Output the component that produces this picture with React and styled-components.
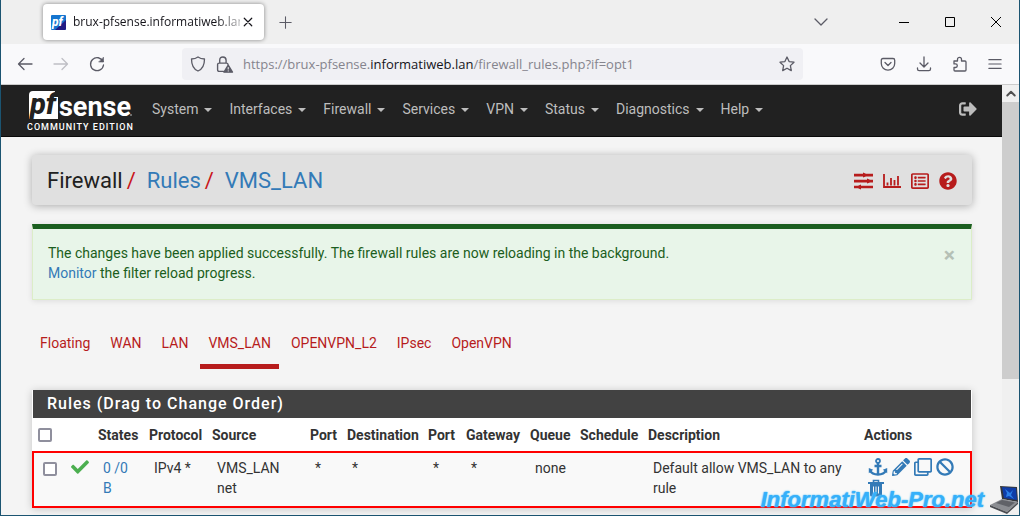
import React from 'react'
import styled, { createGlobalStyle } from 'styled-components'
import { FaBan, FaCheck, FaPencilAlt, FaQuestionCircle, FaRegClone, FaRegListAlt, FaSignOutAlt } from 'react-icons/fa'

const GlobalStyle = createGlobalStyle`
* { box-sizing: border-box; }
body {
  margin: 0;
  background: #f4f4f4;
  color: #333;
  font: 14px/20px Roboto, "Liberation Sans", sans-serif;
}
a { color: #337ab7; text-decoration: none; }
button { border: 0; padding: 0; margin: 0; background: none; color: inherit; font: inherit; }
svg { display: block; flex: none; overflow: visible; }
`

const Window = styled.div`
  display: flex;
  flex-direction: column;
  min-height: 100vh;
  border: solid #1b5471;
  border-width: 0 1px 1px;
  position: relative;
`

// browser chrome
const TitleBar = styled.div`
  display: flex;
  align-items: center;
  height: 44px;
  padding-left: 42px;
  background: #efefef;
  color: #5b5b66;
`
const BrowserTab = styled.div`
  display: flex;
  align-items: center;
  gap: 7px;
  width: 221px;
  height: 36px;
  padding: 0 10px 0 8px;
  margin-right: 15px;
  background: #fff;
  border-radius: 4px;
  box-shadow: 0 0 4px rgba(0, 0, 0, 0.45);
  color: #15141a;
`
const TabTitle = styled.span`
  flex: 1;
  min-width: 0;
  margin-right: -5px;
  white-space: nowrap;
  font: 12px/20px "Open Sans", sans-serif;
  mask-image: linear-gradient(to left, rgba(0, 0, 0, 0.3), #000 24px);
`
const Spacer = styled.div`
  flex: 1;
`
const WindowButtons = styled.div`
  display: flex;
  margin-left: 52px;
  color: #000;
`
const WindowButton = styled.button`
  display: flex;
  align-items: center;
  justify-content: center;
  width: 46px;
  height: 30px;
`
const ToolBar = styled.div`
  display: flex;
  align-items: center;
  height: 41px;
  padding: 0 17px 0 16px;
  background: #f9f9fb;
  border-bottom: 1px solid #ccc;
  color: #5b5b66;
`
const ToolGroup = styled.div`
  display: flex;
  align-items: center;
  gap: ${props => props.$gap};
`
const AddressBar = styled.div`
  display: flex;
  align-items: center;
  gap: 10px;
  flex: 1;
  height: 32px;
  margin: 0 77px;
  padding: 0 8px;
  background: #f0f0f4;
  border-radius: 4px;
`
const Url = styled.span`
  flex: 1;
  font: 13px/20px "Open Sans", sans-serif;
  color: #85848d;
  b { font-weight: normal; color: #15141a; }
`
const Viewport = styled.div`
  display: flex;
  flex: 1;
`
const ScrollBar = styled.div`
  width: 17px;
  background: #f0f0f0;
  color: #505050;
`
const ScrollUp = styled.button`
  display: flex;
  align-items: center;
  justify-content: center;
  width: 17px;
  height: 17px;
`
const ScrollThumb = styled.div`
  height: 277px;
  background: #cdcdcd;
`

// pfSense page
const Page = styled.div`
  flex: 1;
  min-width: 0;
`
const NavBar = styled.nav`
  display: flex;
  align-items: center;
  height: 52px;
  padding: 0 25px 4px 26px;
  background: #212121;
  border-bottom: 1px solid #090909;
  color: #bdbdbd;
`
const Brand = styled.a`
  width: 107px;
  padding-top: 3px;
  margin-right: 18px;
  color: #fff;
`
const Edition = styled.div`
  font-size: 9px;
  line-height: 10px;
  font-weight: 500;
  letter-spacing: 1px;
  white-space: nowrap;
`
const Menu = styled.ul`
  display: flex;
  flex: 1;
  gap: 17px;
  margin: 0;
  padding: 0;
  list-style: none;
`
const MenuLink = styled.a`
  display: flex;
  align-items: center;
  gap: 6px;
  color: #bdbdbd;
  &::after {
    content: "";
    margin-top: 2px;
    border: solid transparent;
    border-width: 4px 4px 0;
    border-top-color: #bdbdbd;
  }
`
const Content = styled.main`
  padding: 18px 30px 7px 31px;
`
const PageHeader = styled.header`
  display: flex;
  align-items: center;
  justify-content: space-between;
  height: 50px;
  padding: 2px 15px 0;
  margin-bottom: 19px;
  background: #e0e0e0;
  border-radius: 4px;
  box-shadow: 0 1px 8px rgba(0, 0, 0, 0.3);
`
const Breadcrumb = styled.h1`
  display: flex;
  margin: 0;
  font-size: 22px;
  line-height: 24px;
  font-weight: 400;
  color: #212121;
`
const Slash = styled.span`
  margin: 0 11px 0 4px;
  color: #c9151b;
`
const HeaderIcons = styled.div`
  display: flex;
  gap: 10px;
`
const IconLink = styled.a`
  color: ${props => props.$tone || '#337ab7'};
`
const Alert = styled.div`
  display: flex;
  align-items: flex-start;
  justify-content: space-between;
  padding: 14px 16px 16px 15px;
  background: #e8f5e9;
  border: 1px solid #dcedc8;
  border-top: 5px solid #1b5e20;
  box-shadow: 0 1px 6px rgba(0, 0, 0, 0.1);
  color: #1b5e20;
`
const Message = styled.div`
  padding-bottom: 0;
`
const CloseButton = styled.button`
  margin-top: 2px;
  font-size: 21px;
  line-height: 20px;
  font-weight: 700;
  color: #b5c0b6;
`
const Tabs = styled.ul`
  display: flex;
  gap: 4px;
  margin: 23px 0 21px;
  padding: 0;
  list-style: none;
`
const TabLink = styled.a`
  display: block;
  height: 46px;
  padding: 10px 8px 0;
  border-bottom: 5px solid ${props => props.$active ? '#b71c1c' : 'transparent'};
  color: #b71c1c;
`
const Panel = styled.section`
  box-shadow: 0 1px 8px rgba(0, 0, 0, 0.2);
  background: #fff;
`
const PanelTitle = styled.h2`
  margin: 0 1px;
  padding: 4px 14px;
  background: #424242;
  color: #fff;
  font-size: 16px;
  line-height: 20px;
  font-weight: 500;
  letter-spacing: 1px;
`
const Table = styled.table`
  width: 100%;
  table-layout: fixed;
  border-collapse: separate;
  border-spacing: 0;
`
const Col = styled.col`
  width: ${props => props.$w ? props.$w + 'px' : 'auto'};
`
const Th = styled.th`
  height: 33px;
  padding: 1px 0 0 6px;
  text-align: left;
  font-weight: 700;
  white-space: nowrap;
`
const Row = styled.tr`
  height: 57px;
  background: #f9f9f9;
  outline: 2px solid #f00;
  outline-offset: -2px;
`
const Td = styled.td`
  padding: 7px 5px 0 11px;
  vertical-align: top;
`
const IconTd = styled(Td)`
  padding-left: 5px;
`
const CheckBox = styled.input`
  appearance: none;
  display: block;
  width: 14px;
  height: 14px;
  margin: ${props => props.$top || '0'} 0 0;
  border: 2px solid #8f8f9d;
  border-radius: 2px;
  background: #fff;
`
const ActionsTd = styled(Td)`
  padding-left: 10px;
`
const Actions = styled.div`
  display: flex;
  flex-wrap: wrap;
  gap: 3px 4px;
`
const Watermark = styled.div`
  position: absolute;
  right: 0;
  bottom: 0;
  display: flex;
  align-items: center;
  gap: 5px;
  font: italic bold 22px/30px "Liberation Sans", sans-serif;
  color: #35b0fa;
  text-shadow: 0 0 2px #6fd3ff, 0 0 1px #2f9be8;
`

const Line = ({ size = 16, width = 1.3, children }) => (
  <svg width={size} height={size} viewBox="0 0 16 16" fill="none" stroke="currentColor" strokeWidth={width} strokeLinecap="round" strokeLinejoin="round">
    {children}
  </svg>
)

const Favicon = () => (
  <svg width="15" height="15" viewBox="0 0 15 15">
    <rect width="15" height="15" rx="1" fill="#1475cf" />
    <path d="M15 5v9l-1 1H4z" fill="#211b83" />
    <text x="1" y="11" fill="#fff" fontFamily="Roboto, sans-serif" fontSize="12" fontWeight="800" fontStyle="italic">pf</text>
  </svg>
)

const Logo = () => (
  <svg width="107" height="33" viewBox="0 0 107 33">
    <path d="M6 2h25v28H2V6q0-4 4-4z" fill="#fff" />
    <text x="3" y="25" fill="#212121" fontFamily="Roboto, sans-serif" fontSize="29" fontWeight="800" fontStyle="italic">pf</text>
    <path d="M28 2h4v6h-5z" fill="#212121" />
    <text x="32" y="27" fill="#fff" fontFamily="Roboto, sans-serif" fontSize="27" fontWeight="700">sense</text>
    <circle cx="104" cy="26" r="1" fill="#888" />
  </svg>
)

const FilterArrows = () => (
  <svg width="19" height="18" viewBox="0 0 19 18" fill="currentColor">
    <path d="M0 1.800h9V.5L12 1.800h7v2.600h-7L9 5.500V4.400H0zM0 7.800h13V6.500L16 7.800h3v2.600h-3l-3 1.100v-1.100H0zM19 13.700H7v-1.200l-3 1.200H0v2.600h4l3 1.200v-1.200h12z" />
  </svg>
)

const BarChart = () => (
  <svg width="18" height="18" viewBox="0 0 18 18" fill="none" stroke="currentColor" strokeWidth="1.8">
    <path d="M1 2v13h17M4.500 13.500v-3M8 13.500V6M11.500 13.500V8M15 13.500V4" />
  </svg>
)

const AnchorIcon = () => (
  <svg width="20" height="18" viewBox="0 0 20 18" fill="none" stroke="currentColor">
    <circle cx="10" cy="3" r="2" strokeWidth="1.8" />
    <path d="M10 5v11.500M6.500 8h7" strokeWidth="2.400" />
    <path d="M2 12.500q2 4 8 4t8-4" strokeWidth="2.400" />
    <path d="M.8 10v5.200l4.400-3.400zM19.200 10v5.200l-4.400-3.400z" fill="currentColor" stroke="none" />
  </svg>
)

const TrashIcon = () => (
  <svg width="16" height="18" viewBox="0 0 16 18">
    <path d="M5.500 3V1.500h5V3" fill="none" stroke="currentColor" strokeWidth="1.6" />
    <path d="M0 3h16v2H0z" fill="currentColor" />
    <path d="M2 5h12v11q0 1.500-1.500 1.500h-9Q2 17.500 2 16z" fill="currentColor" />
    <path d="M5.500 7.500v7M8 7.500v7M10.500 7.500v7" stroke="#f9f9f9" strokeWidth="1" />
  </svg>
)

const Laptop = () => (
  <svg width="30" height="30" viewBox="0 0 30 30">
    <path d="M11 1 28 2 29 17 13 14z" fill="#34363b" />
    <path d="M13 2 27 3 28 15 15 13z" fill="#0f3da8" />
    <path d="m16 4 5 4 3-3-2 5 3 4-5-3-3 1 1-4z" fill="#2b7fe8" />
    <path d="M13 14 29 17 18 27 1 20z" fill="#8b8d92" />
    <path d="M13 15 26 17.500 20 22 7 18z" fill="#606268" />
    <path d="m1 20 17 7v2L1 22zM18 27l11-10v2L18 29z" fill="#4a4c51" />
  </svg>
)

const menus = ['System', 'Interfaces', 'Firewall', 'Services', 'VPN', 'Status', 'Diagnostics', 'Help']
const tabs = ['Floating', 'WAN', 'LAN', 'VMS_LAN', 'OPENVPN_L2', 'IPsec', 'OpenVPN']
const columns = [
  ['States', 51], ['Protocol', 63], ['Source', 98], ['Port', 37], ['Destination', 81], ['Port', 38],
  ['Gateway', 64], ['Queue', 50], ['Schedule', 68], ['Description', 0], ['Actions', 114],
]
const cells = ['IPv4 *', 'VMS_LAN net', '*', '*', '*', '*', 'none', '', 'Default allow VMS_LAN to any rule']

const App = () => {
  return (
    <>
      <GlobalStyle />
      <Window>
        <TitleBar>
          <BrowserTab>
            <Favicon />
            <TabTitle>brux-pfsense.informatiweb.lan</TabTitle>
            <button aria-label="Close tab"><Line size={12} width={1.6}><path d="m3 3 10 10M13 3 3 13" /></Line></button>
          </BrowserTab>
          <button aria-label="New tab"><Line size={13}><path d="M8 1v14M1 8h14" /></Line></button>
          <Spacer />
          <button aria-label="List all tabs"><Line><path d="m2 5 6 6 6-6" /></Line></button>
          <WindowButtons>
            <WindowButton aria-label="Minimize"><svg width="10" height="10"><path d="M0 5.500h10" stroke="currentColor" /></svg></WindowButton>
            <WindowButton aria-label="Maximize"><svg width="10" height="10"><path d="M.5.5h9v9h-9z" fill="none" stroke="currentColor" /></svg></WindowButton>
            <WindowButton aria-label="Close"><svg width="10" height="10"><path d="m0 0 10 10M10 0 0 10" stroke="currentColor" /></svg></WindowButton>
          </WindowButtons>
        </TitleBar>
        <ToolBar>
          <ToolGroup $gap="20px">
            <button aria-label="Back"><Line><path d="M15 8H2M7 2.500 1.500 8 7 13.500" /></Line></button>
            <IconLink as="button" $tone="#bfbfc5" aria-label="Forward"><Line><path d="M1 8h13M9 2.500 14.500 8 9 13.500" /></Line></IconLink>
            <button aria-label="Reload"><Line><path d="M14 5.500A6.500 6.500 0 1 0 14.500 9" /><path d="M14.500 1.500v4.500H10z" fill="currentColor" strokeWidth=".6" /></Line></button>
          </ToolGroup>
          <AddressBar>
            <Line><path d="M8 1c2 1.500 4 2 6.500 2 0 6-1.500 10-6.500 12C3 13 1.500 9 1.500 3 4 3 6 2.500 8 1z" /></Line>
            <Line size={17}>
              <path d="M7 14.500H3q-1.500 0-1.500-1.500V8q0-1.300 1.500-1.300h7q1 0 1.300 1M3.500 6.500V4q0-3 3-3t3 3v2.500" />
              <path d="m11.500 8.500 4 6.700h-8z" fill="currentColor" />
              <path d="M11.500 10.800v1.500M11.500 13.900v.1" stroke="#f0f0f4" strokeWidth="1" />
            </Line>
            <Url>https://brux-pfsense.<b>informatiweb.lan</b>/firewall_rules.php?if=opt1</Url>
            <button aria-label="Bookmark"><Line><path d="m8 1 2.100 4.600 4.900.6-3.600 3.400.9 5L8 12.200l-4.300 2.400.9-5L1 6.200l4.900-.6z" /></Line></button>
          </AddressBar>
          <ToolGroup $gap="20px">
            <button aria-label="Pocket"><Line><path d="M3 2.500h10q1.700 0 1.700 1.700V7.500a6.700 6.700 0 0 1-13.400 0V4.200q0-1.700 1.700-1.700zM5 6.500l3 3 3-3" /></Line></button>
            <button aria-label="Downloads"><Line><path d="M8 1v9.500M4 7l4 4 4-4M1.500 12v1q0 1.700 1.700 1.700h9.600q1.700 0 1.700-1.700v-1" /></Line></button>
            <button aria-label="Extensions"><Line><path d="M2 5h3.500V3.300a2 2 0 0 1 4 0V5H13q1 0 1 1v8q0 1-1 1H3q-1 0-1-1v-2.500h1.500a1.800 1.800 0 0 0 0-3.600H2z" /></Line></button>
            <button aria-label="Menu"><Line size={14}><path d="M1 3h14M1 8h14M1 13h14" /></Line></button>
          </ToolGroup>
        </ToolBar>
        <Viewport>
          <Page>
            <NavBar>
              <Brand href="#">
                <Logo />
                <Edition>COMMUNITY EDITION</Edition>
              </Brand>
              <Menu>
                {menus.map(name => <li key={name}><MenuLink href="#">{name}</MenuLink></li>)}
              </Menu>
              <IconLink href="#" $tone="#bdbdbd" aria-label="Logout"><FaSignOutAlt size={18} /></IconLink>
            </NavBar>
            <Content>
              <PageHeader>
                <Breadcrumb>
                  Firewall<Slash>/</Slash><a href="#">Rules</a><Slash>/</Slash><a href="#">VMS_LAN</a>
                </Breadcrumb>
                <HeaderIcons>
                  <IconLink href="#" $tone="#b71c1c" aria-label="Related settings"><FilterArrows /></IconLink>
                  <IconLink href="#" $tone="#b71c1c" aria-label="Related status"><BarChart /></IconLink>
                  <IconLink href="#" $tone="#b71c1c" aria-label="Related log entries"><FaRegListAlt size={18} /></IconLink>
                  <IconLink href="#" $tone="#b71c1c" aria-label="Help"><FaQuestionCircle size={18} /></IconLink>
                </HeaderIcons>
              </PageHeader>
              <Alert>
                <Message>
                  The changes have been applied successfully. The firewall rules are now reloading in the background.<br />
                  <a href="#">Monitor</a> the filter reload progress.
                </Message>
                <CloseButton aria-label="Close">×</CloseButton>
              </Alert>
              <Tabs>
                {tabs.map(name => <li key={name}><TabLink href="#" $active={name === 'VMS_LAN'}>{name}</TabLink></li>)}
              </Tabs>
              <Panel>
                <PanelTitle>Rules (Drag to Change Order)</PanelTitle>
                <Table>
                  <colgroup>
                    <Col $w={34} />
                    <Col $w={26} />
                    {columns.map(([name, w], i) => <Col key={i} $w={w} />)}
                  </colgroup>
                  <thead>
                    <tr>
                      <Th><CheckBox type="checkbox" aria-label="Select all rules" /></Th>
                      <Th />
                      {columns.map(([name], i) => <Th key={i}>{name}</Th>)}
                    </tr>
                  </thead>
                  <tbody>
                    <Row>
                      <Td><CheckBox type="checkbox" $top="4px" aria-label="Select rule" /></Td>
                      <IconTd><IconLink as="span" $tone="#4caf50"><FaCheck size={18} /></IconLink></IconTd>
                      <Td><a href="#">0 /0 B</a></Td>
                      {cells.map((text, i) => <Td key={i}>{text}</Td>)}
                      <ActionsTd>
                        <Actions>
                          <IconLink href="#" aria-label="Add separator"><AnchorIcon /></IconLink>
                          <IconLink href="#" aria-label="Edit"><FaPencilAlt size={18} /></IconLink>
                          <IconLink href="#" aria-label="Copy"><FaRegClone size={18} /></IconLink>
                          <IconLink href="#" aria-label="Disable"><FaBan size={18} /></IconLink>
                          <IconLink href="#" aria-label="Delete"><TrashIcon /></IconLink>
                        </Actions>
                      </ActionsTd>
                    </Row>
                  </tbody>
                </Table>
              </Panel>
            </Content>
          </Page>
          <ScrollBar>
            <ScrollUp aria-label="Scroll up"><Line size={12} width={2.6}><path d="m3 10 5-5 5 5" /></Line></ScrollUp>
            <ScrollThumb />
          </ScrollBar>
        </Viewport>
        <Watermark>InformatiWeb-Pro.net<Laptop /></Watermark>
      </Window>
    </>
  )
}

export default App
